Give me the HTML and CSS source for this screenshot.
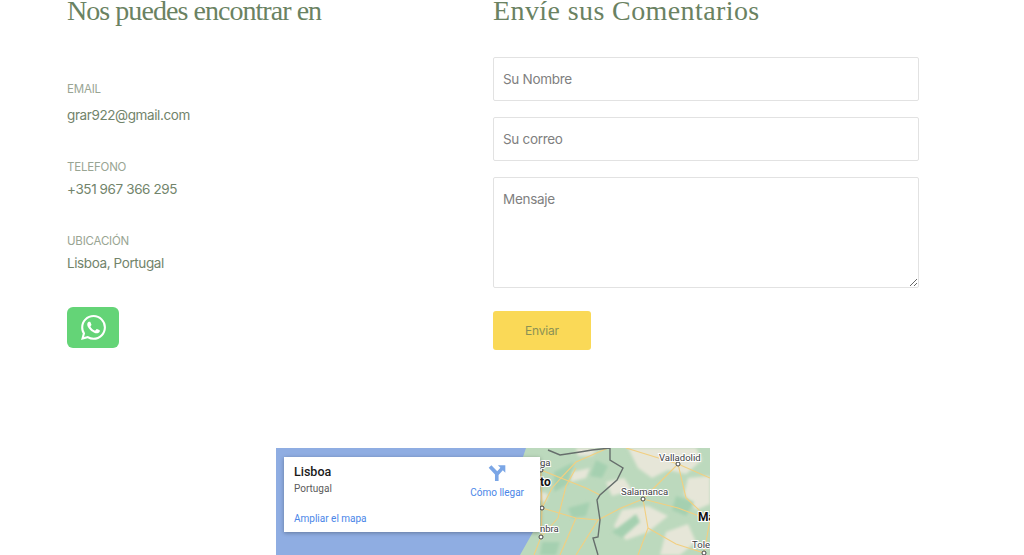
FILE: index.html
```html
<!doctype html>
<html lang="es">
    <head>
        <meta charset="utf-8">
        <meta name="viewport" content="width=device-width, initial-scale=1">
        <title>Contacto</title>
        <link rel="stylesheet" href="styles.css">
    </head>
    <body>
        <div id="wrapper">
            <div class="contact">
                <div class="info">
                    <h2 class="find-title">Nos puedes encontrar en</h2>
                    <div class="item item-first">
                        <span class="item-label">Email</span>
                        <p>grar922@gmail.com</p>
                    </div>
                    <div class="item">
                        <span class="item-label">Telefono</span>
                        <p>+351 967 366 295</p>
                    </div>
                    <div class="item">
                        <span class="item-label">Ubicación</span>
                        <p>Lisboa, Portugal</p>
                    </div>
                    <a class="whatsapp" href="#" aria-label="WhatsApp">
                        <svg viewBox="0 0 24 24" width="25" height="25" fill="#fff">
                            <path d="M17.472 14.382c-.297-.149-1.758-.867-2.03-.967-.273-.099-.471-.148-.67.15-.197.297-.767.966-.94 1.164-.173.199-.347.223-.644.075-.297-.15-1.255-.463-2.39-1.475-.883-.788-1.48-1.761-1.653-2.059-.173-.297-.018-.458.13-.606.134-.133.298-.347.446-.52.149-.174.198-.298.298-.497.099-.198.05-.371-.025-.52-.075-.149-.669-1.612-.916-2.207-.242-.579-.487-.5-.669-.51-.173-.008-.371-.01-.57-.01-.198 0-.52.074-.792.372-.272.297-1.04 1.016-1.04 2.479 0 1.462 1.065 2.875 1.213 3.074.149.198 2.096 3.2 5.077 4.487.709.306 1.262.489 1.694.625.712.227 1.36.195 1.871.118.571-.085 1.758-.719 2.006-1.413.248-.694.248-1.289.173-1.413-.074-.124-.272-.198-.57-.347m-5.421 7.403h-.004a9.87 9.87 0 01-5.031-1.378l-.361-.214-3.741.982.998-3.648-.235-.374a9.86 9.86 0 01-1.51-5.26c.001-5.45 4.436-9.884 9.888-9.884 2.64 0 5.122 1.03 6.988 2.898a9.825 9.825 0 012.893 6.994c-.003 5.45-4.437 9.884-9.885 9.884m8.413-18.297A11.815 11.815 0 0012.05 0C5.495 0 .16 5.335.157 11.892c0 2.096.547 4.142 1.588 5.945L.057 24l6.305-1.654a11.882 11.882 0 005.683 1.448h.005c6.554 0 11.89-5.335 11.893-11.893a11.821 11.821 0 00-3.48-8.413z"/>
                        </svg>
                    </a>
                </div>
                <form class="comments">
                    <h2 class="form-title">Envíe sus Comentarios</h2>
                    <input type="text" placeholder="Su Nombre">
                    <input type="email" placeholder="Su correo">
                    <textarea placeholder="Mensaje"></textarea>
                    <button type="button">Enviar</button>
                </form>
            </div>
            <div class="map">
                <svg class="map-canvas" viewBox="0 0 434 107" width="434" height="107">
                    <defs>
                        <filter id="soft" x="-20%" y="-20%" width="140%" height="140%">
                            <feGaussianBlur stdDeviation="1.4"/>
                        </filter>
                    </defs>
                    <rect width="434" height="107" fill="#8fade2"/>
                    <!-- land -->
                    <path d="M250 0H434V107H244L257 84L247 9Z" fill="#bcd9bd"/>
                    <!-- light patches -->
                    <g fill="#e6e6d8" filter="url(#soft)">
                        <path d="M352 0H420L426 12L410 26L392 22L376 30L362 20Z"/>
                        <path d="M412 30L434 28V56L420 62L408 46Z"/>
                        <path d="M296 24L314 20L310 30L294 34Z"/>
                        <path d="M346 62L372 58L392 68L372 84L350 92L338 78Z"/>
                        <path d="M390 84L412 76L420 94L404 107H384Z"/>
                        <path d="M300 0H322L316 8L302 8Z"/>
                        <path d="M330 34L348 30L356 42L336 48Z"/>
                        <path d="M260 42L272 46L270 54L258 52Z"/>
                    </g>
                    <!-- darker forest -->
                    <g fill="#a5d0b0" filter="url(#soft)">
                        <path d="M278 24L298 14L292 36L278 44Z"/>
                        <path d="M292 60L314 54L310 68L296 70Z"/>
                        <path d="M336 84L360 66L364 74L346 90Z"/>
                        <path d="M320 12L332 18L326 30L314 28Z"/>
                        <path d="M400 48L418 54L410 68L396 62Z"/>
                        <path d="M266 94L284 94L280 107H264Z"/>
                    </g>
                    <!-- roads -->
                    <g fill="none" stroke="#f2cf80" stroke-width="1.1">
                        <path d="M265 22L285 30L300 14L332 0"/>
                        <path d="M266 60L300 70L322 72L345 60L367 51L402 60L434 72"/>
                        <path d="M265 89L282 70L290 38L300 20"/>
                        <path d="M367 51L372 80L362 107"/>
                        <path d="M402 16L367 51"/>
                        <path d="M402 16L434 30"/>
                        <path d="M402 16L410 50L434 72"/>
                        <path d="M350 0L402 16"/>
                        <path d="M265 22L266 60L265 89L258 107"/>
                        <path d="M322 72L300 107"/>
                        <path d="M434 72L428 105"/>
                        <path d="M372 80L400 96L428 105"/>
                        <path d="M285 30L310 40L324 47"/>
                        <path d="M266 60L276 40L285 30"/>
                        <path d="M300 70L284 107"/>
                    </g>
                    <!-- border -->
                    <path d="M272 2L284 7L304 4L316 2L334 0V12L347 20L341 32L324 47L321 52L324 72L322 89L317 90L322 107" fill="none" stroke="#666e6c" stroke-width="1.4"/>
                    <g fill="#fff" stroke="#444" stroke-width="1">
                        <circle cx="402" cy="16" r="2"/>
                        <circle cx="367" cy="51" r="2"/>
                        <circle cx="428" cy="105" r="2"/>
                        <circle cx="265" cy="22" r="2"/>
                        <circle cx="266" cy="60" r="2"/>
                        <circle cx="265" cy="89" r="2"/>
                    </g>
                    <g class="map-labels">
                        <text x="383" y="13">Valladolid</text>
                        <text x="345" y="47">Salamanca</text>
                        <text x="416" y="100">Toled</text>
                        <text x="264" y="18">ga</text>
                        <text x="264" y="84">nbra</text>
                        <text class="big" x="264" y="38">to</text>
                        <text class="big" x="422" y="73">Ma</text>
                    </g>
                </svg>
                <div class="map-card">
                    <div class="place">
                        <strong>Lisboa</strong>
                        <span>Portugal</span>
                    </div>
                    <a class="directions" href="#">
                        <svg viewBox="0 0 16 16" width="18" height="18" fill="#7ba6e6">
                            <path d="M6.2 16V10.2L0.6 4.2L3 2L8.2 7.4L11 4.3L8.8 2H15.4V8.6L13.2 6.4L9.4 10.6V16Z"/>
                        </svg>
                        <span>Cómo llegar</span>
                    </a>
                    <a class="enlarge" href="#">Ampliar el mapa</a>
                </div>
            </div>
        </div>
    </body>
</html>
```

FILE: styles.css
```css
* {
    margin: 0;
    padding: 0;
    box-sizing: border-box;
}

body {
    background: #fff;
    color: #667a5f;
    font-family: 'Inter', 'Liberation Sans', sans-serif;
    font-size: 14px;
}

#wrapper {
    width: 852px;
    margin: -6px 0 0 67px;
}

.contact {
    display: grid;
    grid-template-columns: 426px 426px;
}

h2 {
    font-family: 'Liberation Serif', serif;
    font-weight: 400;
    font-size: 28px;
    line-height: 34px;
    color: #6a8262;
}

.find-title {
    letter-spacing: -0.95px;
    margin-bottom: 53px;
}

.form-title {
    letter-spacing: 0.4px;
}

.item {
    margin-bottom: 35px;
}

.item-label {
    display: block;
    font-size: 11.5px;
    line-height: 16px;
    text-transform: uppercase;
    color: #99a593;
    margin-bottom: 5px;
    letter-spacing: -0.2px;
}

.item-first .item-label {
    margin-bottom: 9px;
}

.item p {
    font-size: 13.5px;
    letter-spacing: -0.4px;
    line-height: 18px;
    color: #72846b;
}

.whatsapp {
    display: flex;
    align-items: center;
    justify-content: center;
    width: 52px;
    height: 41px;
    margin-top: 31px;
    background: #64d477;
    border-radius: 6px;
}

.comments {
    display: flex;
    flex-direction: column;
    align-items: flex-start;
    gap: 16px;
}

.comments h2 {
    margin-bottom: 13px;
}

input, textarea {
    display: block;
    width: 426px;
    height: 44px;
    padding: 0 9px;
    border: 1px solid #e2e2e2;
    border-radius: 2px;
    font-family: 'Inter', 'Liberation Sans', sans-serif;
    font-size: 13.5px;
    letter-spacing: -0.3px;
    color: #667a5f;
    background: #fff;
}

textarea {
    height: 111px;
    padding-top: 13px;
}

input::placeholder, textarea::placeholder {
    color: #808080;
    opacity: 1;
}

button {
    width: 98px;
    height: 39px;
    margin-top: 7px;
    background: #fad957;
    border: 0;
    border-radius: 3px;
    font-family: 'Inter', 'Liberation Sans', sans-serif;
    font-size: 12px;
    letter-spacing: -0.2px;
    color: #8b9155;
}

.map {
    position: relative;
    width: 434px;
    height: 107px;
    margin: 98px auto 0;
    overflow: hidden;
}

.map-canvas {
    display: block;
}

.map-labels text {
    font-family: 'Roboto', 'Liberation Sans', sans-serif;
    font-size: 9.5px;
    fill: #3c4043;
    paint-order: stroke;
    stroke: #fff;
    stroke-width: 2px;
}

.map-labels .big {
    font-size: 12px;
    font-weight: 700;
    fill: #111;
}

.map-card {
    position: absolute;
    top: 9px;
    left: 8px;
    width: 256px;
    height: 75px;
    padding: 7px 10px 0;
    background: #fff;
    box-shadow: 0 1px 4px rgba(0, 0, 0, 0.3);
    display: grid;
    grid-template-columns: 1fr auto;
    grid-template-rows: 43px 1fr;
    font-family: 'Roboto', 'Liberation Sans', sans-serif;
    font-size: 10px;
}

.place {
    display: flex;
    flex-direction: column;
    gap: 4px;
    color: #5b5b5b;
}

.place strong {
    font-size: 12.5px;
    font-weight: 500;
    color: #1a1a1a;
}

.directions {
    display: flex;
    flex-direction: column;
    align-items: center;
    gap: 6px;
    padding-right: 6px;
    margin-top: -1px;
    color: #4a86e8;
    text-decoration: none;
}

.enlarge {
    grid-column: 1 / 3;
    color: #4a86e8;
    text-decoration: none;
    padding-top: 6px;
}
```
